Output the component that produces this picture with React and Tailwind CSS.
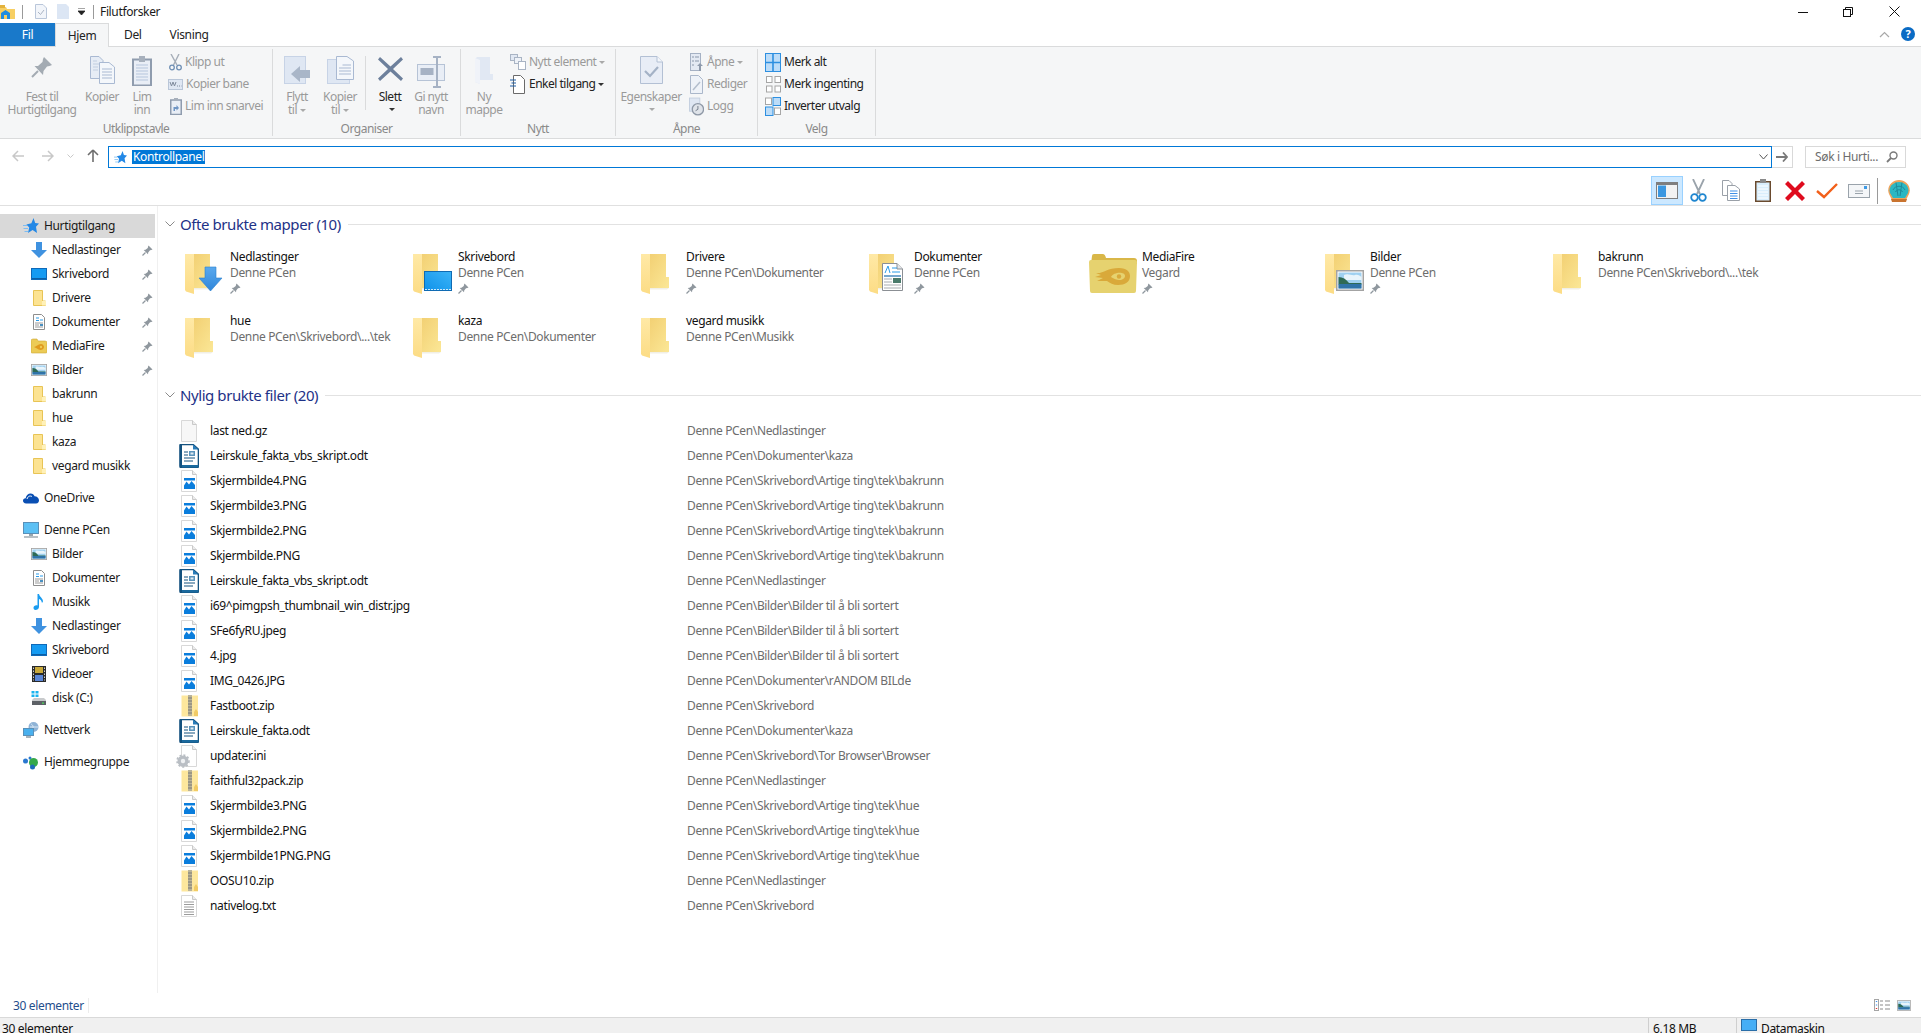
import React from "react";

// ---------- small shared drawings ----------
const Folder = ({ x = 0 }) => (
  <g transform={`translate(${x} 0)`}>
    <path d="M7 0H25V23H28V34H9V28H7Z" fill="url(#folderBack)" />
    <path d="M0 0H9V40L1 37.5 0 36Z" fill="url(#folderSide)" />
    <path d="M9 34H28L26 35.5H9Z" fill="#f1efe6" />
  </g>
);

const DownArrow = () => (
  <path d="M6 0H17V11H23L11.5 24 0 11H6Z" fill="url(#arrowBlue)" stroke="#2a7fcf" strokeWidth=".6" />
);

const Star = ({ size = 16 }) => (
  <svg width={size} height={size} viewBox="0 0 16 16" className="shrink-0">
    <path d="M10.5 0L12.2 5 16 5.4 13 8.8 14 15 9.6 12 5 15 6.2 9.6 3.4 6.4 8.4 5.2Z" fill="#2388e6" />
    <path d="M0 7.5H4M.5 10.5H5M1.5 13.5H5" stroke="#7dbcf2" />
  </svg>
);

const TileIcon = ({ kind }) => (
  <svg width="45" height="40" viewBox="0 0 45 40" className="overflow-visible">
    {kind === "media" ? (
      <g transform="translate(-8 0)">
        <path d="M3 2Q3 0 5 0H14Q16 0 17 4H45Q48 4 48 7V10H2Z" fill="#d9b748" />
        <path d="M0 8Q0 6 2 6H46Q48 6 48 8L47 37Q47 39 45 39H3Q1 39 1 37Z" fill="#e6d26f" />
        <path d="M7 19C14 20 18 14 30 14 38 14 41 18 41 22 41 28 36 31 29 31 24 31 21 29 18 27L8 27 14 24 6 23 12 21Z" fill="#d9a93a" />
        <path d="M22 23C24 18 36 17 36 22 36 26 29 28 22 23Z" fill="#e6d26f" />
        <circle cx="30" cy="22.5" r="2.2" fill="#d9a93a" />
      </g>
    ) : (
      <Folder />
    )}
    {kind === "down" && (
      <g transform="translate(14 13)"><DownArrow /></g>
    )}
    {kind === "desk" && (
      <g transform="translate(11 17)">
        <rect x=".5" y=".5" width="27" height="19" fill="url(#deskBlue)" stroke="#106bb3" />
        <path d="M1 18.5H27" stroke="#cfe9fb" strokeDasharray="2 1" />
      </g>
    )}
    {kind === "doc" && (
      <g transform="translate(13 9)">
        <path d="M.5.5H15L20.5 6V27.5H.5Z" fill="#fff" stroke="#8b8f94" />
        <path d="M15 .5V6H20.5" fill="#e4e6ea" stroke="#8b8f94" />
        <path d="M3 10L6 3 8 10M10 5H15M10 9H18" stroke="#2a9be8" fill="none" />
        <path d="M2 13H19" stroke="#1d6fb0" strokeWidth="1.2" />
        <path d="M2 16H10M2 19H10M2 22H19M2 25H19" stroke="#a8abb0" />
        <rect x="11" y="15" width="8" height="5" fill="#4a7a6b" />
      </g>
    )}
    {kind === "pics" && (
      <g transform="translate(11 16)"><Landscape w={28} h={21} /></g>
    )}
  </svg>
);

const Landscape = ({ w, h }) => (
  <svg width={w} height={h} viewBox="0 0 28 21">
    <rect x=".75" y=".75" width="26.5" height="19.5" fill="#fff" stroke="#a3a3a3" strokeWidth="1.5" />
    <rect x="2.5" y="2.5" width="23" height="16" fill="#9fd0f0" />
    <path d="M8 5C12 3 16 6 19 5S24 6 25.5 7V10H8Z" fill="#e8f4fb" />
    <path d="M2.5 7C7 7 10 9 13 13L25.5 13V14.5H2.5Z" fill="#2e6a55" />
    <rect x="2.5" y="14" width="23" height="4.5" fill="#2f73a8" />
  </svg>
);

const Pin = ({ className = "" }) => (
  <svg width="11" height="11" viewBox="0 0 11 11" className={className}>
    <path d="M6.5.5L10.5 4.5 9.3 5 8 5.2 6.2 7.5 6 9.3 1.7 5 3.5 4.8 5.8 3 6 1.7Z" fill="#8f979e" />
    <path d="M3.5 7.5L.5 10.5" stroke="#8f979e" strokeWidth="1.2" />
  </svg>
);

// ---------- sidebar icons, all 16px wide ----------
const SmallFolder = () => (
  <svg width="16" height="16" viewBox="0 0 16 16">
    <path d="M2.5.5H11.5V11H14.5V15.5H2.5Z" fill="#fce392" stroke="#e8c455" />
    <path d="M11 11H15V15.5H11Z" fill="#fff1b8" />
  </svg>
);

const SideIcon = ({ kind }) => {
  switch (kind) {
    case "star":
      return <Star />;
    case "down":
      return (
        <svg width="16" height="16" viewBox="0 0 16 16">
          <path d="M5 0H11V8H16L8 16 0 8H5Z" fill="#3f92e0" />
        </svg>
      );
    case "desk":
      return (
        <svg width="16" height="16" viewBox="0 0 16 16">
          <rect x=".5" y="2.5" width="15" height="11" fill="#159bf2" stroke="#0f69b8" />
          <path d="M1 12.5H15" stroke="#0b5fa5" />
        </svg>
      );
    case "folder":
      return <SmallFolder />;
    case "doc":
      return (
        <svg width="16" height="16" viewBox="0 0 16 16">
          <path d="M2.5.5H10.5L13.5 3.5V15.5H2.5Z" fill="#fff" stroke="#8e8e8e" />
          <path d="M5 4H8M9 6H12M5 6.5H8" stroke="#2a9be8" />
          <path d="M4 9H12M4 11H8M4 13H12" stroke="#9a9a9a" />
          <rect x="9" y="10" width="3" height="2" fill="#4a90c0" />
        </svg>
      );
    case "media":
      return (
        <svg width="16" height="16" viewBox="0 0 16 16">
          <path d="M0 3Q0 1 2 1H6L7 3H14Q16 3 16 5V14Q16 15 15 15H1Q0 15 0 14Z" fill="#eccb56" stroke="#cfa836" strokeWidth=".6" />
          <path d="M3 9C5 9 7 6 10 6 12 6 13 8 13 9 13 11 11 12 9.5 12 8 12 7 11 6 10.5Z" fill="#e09a1e" />
          <circle cx="10" cy="9" r="1.2" fill="#eccb56" />
        </svg>
      );
    case "pics":
      return <Landscape w={16} h={12} />;
    case "cloud":
      return (
        <svg width="16" height="16" viewBox="0 0 16 16">
          <path d="M3.2 13.5C1 13.5 0 12 0 10.8 0 9.4 1 8.2 2.6 8.2 3.2 5.5 5.2 3.5 7.6 3.5 9.6 3.5 11 4.8 11.6 6.2 14 6.2 16 8 16 10.2 16 12 15 13.5 13 13.5Z" fill="#0a4fb3" />
          <path d="M4 9C5 6 7 5.5 9 6.5" stroke="#fff" fill="none" />
        </svg>
      );
    case "pc":
      return (
        <svg width="16" height="16" viewBox="0 0 16 16">
          <rect x=".5" y=".5" width="15" height="11" fill="#5cc0f4" stroke="#5a90b8" />
          <rect x="6" y="12" width="4" height="2" fill="#9aa5ad" />
          <path d="M1 15H15" stroke="#9aa5ad" strokeWidth="1.4" />
        </svg>
      );
    case "music":
      return (
        <svg width="16" height="16" viewBox="0 0 16 16">
          <path d="M6.5 0H8C8.5 3 12 4 12 7.5L11 9C10.5 6.5 9.5 5.5 8 5V13C8 15 6 16 4.5 16S2.5 15 2.5 13.8C2.5 12 4.5 11 6.5 11.5Z" fill="#1a9cf0" />
        </svg>
      );
    case "video":
      return (
        <svg width="16" height="16" viewBox="0 0 16 16">
          <rect x="1" y="0" width="14" height="16" fill="#2a2a2a" />
          <path d="M2.5 1.5V14.5M13.5 1.5V14.5" stroke="#cfcfcf" strokeDasharray="1.5 1.5" />
          <rect x="4" y="1" width="8" height="6" fill="#c9a93a" />
          <rect x="4" y="9" width="8" height="6" fill="#5a86d8" />
        </svg>
      );
    case "disk":
      return (
        <svg width="16" height="16" viewBox="0 0 16 16">
          <path d="M.5 1H3.5V3.5H.5ZM4.5 1H7.5V3.5H4.5ZM.5 4.5H3.5V7H.5ZM4.5 4.5H7.5V7H4.5Z" fill="#19b4f0" />
          <path d="M1 10L3 8H13L15 10V14H1Z" fill="#c8cacc" />
          <rect x="1" y="11" width="14" height="4" fill="#5d6166" />
          <rect x="11" y="12.5" width="2" height="1.2" fill="#4de05a" />
        </svg>
      );
    case "net":
      return (
        <svg width="16" height="16" viewBox="0 0 16 16">
          <circle cx="10.5" cy="5" r="5" fill="#8fb3d6" />
          <path d="M8 2C10 3 11 5 9 8M7 5H15" stroke="#dbe9f5" fill="none" />
          <rect x=".5" y="6.5" width="10" height="7" fill="#49b0ee" stroke="#5a90b8" />
          <path d="M3 15H8" stroke="#8a9aa6" strokeWidth="1.5" />
        </svg>
      );
    case "home":
      return (
        <svg width="16" height="16" viewBox="0 0 16 16">
          <circle cx="2.5" cy="7" r="2.5" fill="#2a78d0" />
          <circle cx="7" cy="4" r="1.5" fill="#2a78d0" />
          <circle cx="10.5" cy="8.5" r="4.5" fill="#35a84a" />
          <circle cx="9.5" cy="13" r="2.5" fill="#1d6bb8" />
        </svg>
      );
    default:
      return null;
  }
};

// ---------- file icons ----------
const FileIcon = ({ kind }) => {
  if (kind === "odt") {
    return (
      <svg width="20" height="24" viewBox="0 0 20 24" className="-ml-[2px] shrink-0">
        <path d="M1 1.5Q1 .5 2 .5H14L19.5 5.5V22Q19.5 23.5 18 23.5H2Q1 23.5 1 22Z" fill="#fff" stroke="#14527f" strokeWidth="1.6" />
        <path d="M1 1.5Q1 .5 2 .5H3V23.5H2Q1 23.5 1 22Z" fill="#14527f" />
        <path d="M3 21H19.5V22Q19.5 23.5 18 23.5H3Z" fill="#1b6a9e" />
        <path d="M14 .5L19.5 5.5H14Z" fill="#2a7cb8" />
        <path d="M5 8H9M5 11H9M5 14H16M5 17H14" stroke="#15527e" />
        <rect x="10" y="7" width="6" height="5" fill="#5a93bb" />
        <rect x="11.5" y="8.5" width="3" height="2" fill="#dfeaf2" />
      </svg>
    );
  }
  return (
    <svg width="16" height="22" viewBox="0 0 16 22" className="overflow-visible shrink-0">
      {kind === "zip" ? (
        <g>
          <rect x=".5" y=".5" width="16.5" height="21" fill="#fde79d" />
          <rect x="7" y="0" width="4" height="21" fill="#b9b39a" />
          <path d="M7 3H11M7 6H11M7 9H11M7 12H11M7 15H11M7 18H11" stroke="#7c7a70" />
          <path d="M13 21V17L15 14 17 17V21Z" fill="#f1cb66" />
        </g>
      ) : (
        <g>
          <path d="M.5.5H11.5L15.5 4.5V21.5H.5Z" fill={kind === "blank" ? "#f7f7f7" : "#fff"} stroke="#d8d8d8" />
          <path d="M11.5.5V4.5H15.5" fill="#ececec" stroke="#c9c9c9" />
        </g>
      )}
      {kind === "img" && (
        <g>
          <rect x="3" y="8" width="11" height="11" fill="#0a7ddc" />
          <path d="M3 15.5L5.5 11.5 8 14.5 10.5 11 14 15V10.5H3Z" fill="#fff" />
        </g>
      )}
      {kind === "ini" && (
        <g>
          <circle cx="2" cy="16" r="5.5" fill="#b9bec4" />
          <circle cx="2" cy="16" r="2.2" fill="#eef0f2" />
          <circle cx="2" cy="16" r="6" fill="none" stroke="#b9bec4" strokeWidth="1.6" strokeDasharray="2 2" />
        </g>
      )}
      {kind === "txt" && (
        <path d="M3 7H13M3 9.5H13M3 12H13M3 14.5H13M3 17H13M3 19.5H13" stroke="#9b9b9b" />
      )}
    </svg>
  );
};

// ---------- ribbon drawings (greyed, 30ish px) ----------
const RibbonIcon = ({ kind }) => {
  switch (kind) {
    case "pin":
      return (
        <svg width="22" height="22" viewBox="0 0 22 22">
          <path d="M13 1L21 9 18.5 10 16 10.5 12.5 15 12 19 3.5 10 7 10 11.5 6 12 3Z" fill="#a3abb3" />
          <path d="M7 15L1 21" stroke="#a3abb3" strokeWidth="2" />
        </svg>
      );
    case "copy":
      return (
        <svg width="25" height="28" viewBox="0 0 25 28">
          <path d="M.5.5H9L13 4.5V22.5H.5Z" fill="#e6ecf5" stroke="#a9b9d2" />
          <path d="M9.5 6.5H19L24.5 11V27.5H9.5Z" fill="#f4f7fb" stroke="#a9b9d2" />
          <path d="M12 13H22M12 16H22M12 19H22M12 22H22" stroke="#a9b9d2" />
          <path d="M3 5H7M3 8H9M3 11H8M3 14H8" stroke="#c1cee0" />
        </svg>
      );
    case "paste":
      return (
        <svg width="20" height="30" viewBox="0 0 20 30">
          <rect x="1" y="3.5" width="18" height="26" fill="#e9eef6" stroke="#8f9cae" strokeWidth="2" />
          <rect x="7" y="0" width="6" height="6" fill="#a7b0bc" />
          <path d="M4 9H16M4 12H16M4 15H16M4 18H16M4 21H16M4 24H16" stroke="#b5c5dc" />
        </svg>
      );
    case "move":
      return (
        <svg width="27" height="28" viewBox="0 0 27 28">
          <rect x=".5" y=".5" width="21" height="27" fill="#dfe7f3" stroke="#c7d3e6" />
          <path d="M16 14V10L7 18 16 26V22H26V14Z" fill="#a9b6c8" />
        </svg>
      );
    case "copyto":
      return (
        <svg width="27" height="28" viewBox="0 0 27 28">
          <rect x=".5" y="3.5" width="22" height="24" fill="#dfe7f3" stroke="#c7d3e6" />
          <path d="M9.5.5H20L26.5 5V23.5H9.5Z" fill="#f4f7fb" stroke="#a9b9d2" />
          <path d="M15.5 9H24M12 12H24M12 15H24M12 18H24" stroke="#a9b9d2" />
        </svg>
      );
    case "del":
      return (
        <svg width="25" height="26" viewBox="0 0 25 26">
          <path d="M2 1L12.5 10.5 23 1 25 3.5 15 13 25 22.5 23 25 12.5 15.5 2 25 0 22.5 10 13 0 3.5Z" fill="#6d809c" />
        </svg>
      );
    case "rename":
      return (
        <svg width="28" height="32" viewBox="0 0 28 32">
          <rect x=".5" y="8.5" width="27" height="16" fill="#e9eef6" stroke="#b6c3d6" />
          <rect x="3.5" y="12" width="13" height="7" fill="#a6b2c4" />
          <path d="M16 1H24M20 1V31M16 31H24" stroke="#a6b2c4" strokeWidth="2" />
        </svg>
      );
    case "newfolder":
      return (
        <svg width="20" height="28" viewBox="0 0 20 28">
          <path d="M3 1H16V18H19V24H6V28L1 26V3Z" fill="#e1e8f3" />
          <path d="M1 2L6 4V28L1 26Z" fill="#f0f3f9" />
        </svg>
      );
    case "props":
      return (
        <svg width="23" height="28" viewBox="0 0 23 28">
          <path d="M.5.5H17L22.5 6V27.5H.5Z" fill="#e8edf6" stroke="#b3c0d4" />
          <path d="M17 .5V6H22.5" fill="#f4f7fb" stroke="#b3c0d4" />
          <path d="M5 15L10 20 18 11" stroke="#a4b2c6" strokeWidth="2.2" fill="none" />
        </svg>
      );
    default:
      return null;
  }
};

const SmallIcon = ({ kind }) => {
  switch (kind) {
    case "cut":
      return (
        <svg width="13" height="17" viewBox="0 0 13 17">
          <path d="M2 0L8 11M10 0L4.5 11" stroke="#a6aeb8" strokeWidth="1.4" />
          <circle cx="3" cy="13.5" r="2.3" fill="none" stroke="#6f8fb4" strokeWidth="1.3" />
          <circle cx="10" cy="13.5" r="2.3" fill="none" stroke="#6f8fb4" strokeWidth="1.3" />
        </svg>
      );
    case "path":
      return (
        <svg width="15" height="11" viewBox="0 0 15 11">
          <rect x=".5" y=".5" width="14" height="10" fill="#dfe7f3" stroke="#b9c6d8" />
          <path d="M2 3L3.5 7 5 3 6.5 7 8 3M9 7H10M11 7H12M13 7H13.5" stroke="#7f8b9c" fill="none" />
        </svg>
      );
    case "shortcut":
      return (
        <svg width="12" height="17" viewBox="0 0 12 17">
          <rect x=".75" y="2" width="10.5" height="14.5" fill="#e9eef6" stroke="#8f9cae" strokeWidth="1.5" />
          <rect x="4" y="0" width="4" height="3" fill="#a7b0bc" />
          <path d="M3.5 13V9H6.5V7L9 10 6.5 12.5V11H5V13Z" fill="#6f95c4" />
        </svg>
      );
    case "newitem":
      return (
        <svg width="16" height="16" viewBox="0 0 16 16">
          <rect x=".5" y=".5" width="7" height="6" fill="#e1e8f3" stroke="#a9b4c4" />
          <rect x="4.5" y="3.5" width="7" height="6" fill="#eef2f8" stroke="#a9b4c4" />
          <rect x="8.5" y="7.5" width="7" height="8" fill="#fff" stroke="#a9b4c4" />
        </svg>
      );
    case "easy":
      return (
        <svg width="15" height="19" viewBox="0 0 15 19">
          <path d="M3.5.5H10.5L14.5 4.5V18.5H3.5Z" fill="#fff" stroke="#6a6a6a" />
          <path d="M0 5H6M1.5 8H6M0 11H6" stroke="#1f5fa6" strokeWidth="1.2" />
        </svg>
      );
    case "open":
      return (
        <svg width="13" height="19" viewBox="0 0 13 19">
          <rect x=".5" y=".5" width="10" height="17" fill="#e3e9f3" stroke="#a5b1c4" />
          <path d="M2 4H4M5 4H9M2 8H4M5 8H9M2 12H4" stroke="#8a97aa" />
          <path d="M9 18V13H7L10 10 13 13H11V18Z" fill="#8e9aac" />
        </svg>
      );
    case "edit":
      return (
        <svg width="13" height="19" viewBox="0 0 13 19">
          <path d="M.5.5H8.5L12.5 4.5V18.5H.5Z" fill="#eef2f8" stroke="#aab7ca" />
          <path d="M3 15L10 7" stroke="#b2bdcc" strokeWidth="1.5" />
        </svg>
      );
    case "log":
      return (
        <svg width="16" height="19" viewBox="0 0 16 19">
          <rect x=".5" y=".5" width="11" height="14" fill="#dfe7f3" stroke="#c3cfdf" />
          <circle cx="9.5" cy="12.5" r="6" fill="#dfe3e9" stroke="#8e98a6" strokeWidth="1.4" />
          <path d="M9.5 9V12.5L7 14" stroke="#6f7a88" fill="none" />
        </svg>
      );
    case "all":
      return (
        <svg width="16" height="19" viewBox="0 0 16 19">
          <rect x=".5" y=".5" width="15" height="18" fill="#bcdcf8" stroke="#2d8fe0" />
          <path d="M8 0V19M0 9.5H16" stroke="#2d8fe0" strokeWidth="1.6" />
        </svg>
      );
    case "none":
      return (
        <svg width="15" height="17" viewBox="0 0 15 17">
          <rect x=".5" y=".5" width="5.5" height="6" fill="#fff" stroke="#a6a6a6" />
          <rect x="9" y=".5" width="5.5" height="6" fill="#fff" stroke="#a6a6a6" />
          <rect x=".5" y="10" width="5.5" height="6" fill="#fff" stroke="#a6a6a6" />
          <rect x="9" y="10" width="5.5" height="6" fill="#fff" stroke="#a6a6a6" />
        </svg>
      );
    case "invert":
      return (
        <svg width="16" height="19" viewBox="0 0 16 19">
          <rect x=".5" y="1" width="6" height="6.5" fill="#fff" stroke="#a6a6a6" />
          <rect x="8" y=".5" width="7.5" height="8" fill="#bcdcf8" stroke="#2d8fe0" />
          <rect x=".5" y="10" width="7.5" height="8.5" fill="#bcdcf8" stroke="#2d8fe0" />
          <rect x="9.5" y="11" width="6" height="6.5" fill="#fff" stroke="#a6a6a6" />
        </svg>
      );
    default:
      return null;
  }
};

const Caret = ({ dark }) => (
  <span className={`inline-block ml-[3px] align-middle w-0 h-0 border-x-[3px] border-x-transparent border-t-[3px] ${dark ? "border-t-[#333333]" : "border-t-[#a9a9a9]"}`} />
);

const BigBtn = ({ w, icon, lines, dark, caret }) => (
  <div className="flex flex-col items-center pt-[6px] shrink-0" style={{ width: w }}>
    <div className="h-[35px] flex items-start justify-center pt-[1px]">
      <RibbonIcon kind={icon} />
    </div>
    <div className={`text-center leading-[13px] ${dark ? "text-[#222222]" : "text-[#9a9a9a]"}`}>
      {lines.map((l, i) => (
        <div key={i} className="h-[13px] whitespace-nowrap">
          {l}
          {caret && lines.length > 1 && i === 1 && <Caret dark={dark} />}
        </div>
      ))}
      {caret && lines.length === 1 && (
        <div className="h-[13px] flex justify-center items-center">
          <Caret dark={dark} />
        </div>
      )}
    </div>
  </div>
);

const SmallBtn = ({ icon, label, dark, caret, iconW = 17, ml = 0 }) => (
  <div className="h-[22px] flex items-center whitespace-nowrap" style={{ marginLeft: ml }}>
    <div className="flex justify-center shrink-0" style={{ width: iconW }}>
      <SmallIcon kind={icon} />
    </div>
    <span className={`ml-[3px] ${dark ? "text-[#222222]" : "text-[#9a9a9a]"}`}>
      {label}
      {caret && <Caret dark={dark} />}
    </span>
  </div>
);

const Group = ({ w, label, children }) => (
  <div className="h-[87px] flex flex-col border-r border-[#dadbdc] shrink-0" style={{ width: w }}>
    <div className="flex-1 flex items-start min-h-0">{children}</div>
    <div className="h-[14px] leading-[14px] text-center text-[#8a8a8a]">{label}</div>
  </div>
);

const SmallCol = ({ children, className = "" }) => (
  <div className={`pt-[2px] ${className}`}>{children}</div>
);

const Ribbon = () => (
  <div className="h-[92px] shrink-0 bg-[#f5f6f7] border-b border-[#dadbdc] pt-[2px] flex tracking-[-0.5px]">
    <Group w={273} label="Utklippstavle">
      <BigBtn w={84} icon="pin" lines={["Fest til", "Hurtigtilgang"]} />
      <BigBtn w={36} icon="copy" lines={["Kopier"]} />
      <BigBtn w={44} icon="paste" lines={["Lim", "inn"]} />
      <SmallCol className="ml-[5px]">
        <SmallBtn icon="cut" label="Klipp ut" iconW={13} />
        <SmallBtn icon="path" label="Kopier bane" iconW={15} ml={-1} />
        <SmallBtn icon="shortcut" label="Lim inn snarvei" iconW={13} />
      </SmallCol>
    </Group>
    <Group w={188} label="Organiser">
      <BigBtn w={48} icon="move" lines={["Flytt", "til"]} caret />
      <BigBtn w={38} icon="copyto" lines={["Kopier", "til"]} caret />
      <div className="w-px h-[54px] mt-[7px] ml-[6px] bg-[#dadbdc] shrink-0" />
      <BigBtn w={48} icon="del" lines={["Slett"]} dark caret />
      <BigBtn w={34} icon="rename" lines={["Gi nytt", "navn"]} />
    </Group>
    <Group w={155} label="Nytt">
      <BigBtn w={46} icon="newfolder" lines={["Ny", "mappe"]} />
      <SmallCol className="ml-[2px]">
        <SmallBtn icon="newitem" label="Nytt element" caret />
        <SmallBtn icon="easy" label="Enkel tilgang" dark caret />
      </SmallCol>
    </Group>
    <Group w={142} label="Åpne">
      <BigBtn w={70} icon="props" lines={["Egenskaper"]} caret />
      <SmallCol className="ml-[3px]">
        <SmallBtn icon="open" label="Åpne" caret iconW={15} />
        <SmallBtn icon="edit" label="Rediger" iconW={15} />
        <SmallBtn icon="log" label="Logg" iconW={15} />
      </SmallCol>
    </Group>
    <Group w={118} label="Velg">
      <SmallCol className="ml-[7px]">
        <SmallBtn icon="all" label="Merk alt" iconW={16} dark />
        <SmallBtn icon="none" label="Merk ingenting" iconW={16} dark />
        <SmallBtn icon="invert" label="Inverter utvalg" iconW={16} dark />
      </SmallCol>
    </Group>
  </div>
);

const TitleBar = () => (
  <div className="h-[23px] shrink-0 flex items-center bg-white">
    <svg width="15" height="14" viewBox="0 0 15 14" className="shrink-0">
      <path d="M0 2H6L7 4H15V14H0Z" fill="#f7cf63" />
      <rect x="0" y="0" width="5" height="3" fill="#e3b23c" />
      <path d="M1 14V8L5.5 5 10 8V14H7V10H4V14Z" fill="#1f8de0" />
    </svg>
    <div className="w-px h-[14px] bg-[#9a9a9a] ml-[7px]" />
    <svg width="12" height="15" viewBox="0 0 12 15" className="ml-[12px]">
      <path d="M.5.5H8L11.5 4V14.5H.5Z" fill="#f2f5fa" stroke="#b9c6da" />
      <path d="M3 8L5.5 10.5 9 6" stroke="#aab4c4" fill="none" />
    </svg>
    <svg width="12" height="15" viewBox="0 0 12 15" className="ml-[10px]">
      <path d="M0 0H9L12 3V15H0Z" fill="#dce6f4" />
    </svg>
    <svg width="7" height="7" viewBox="0 0 7 7" className="ml-[9px]">
      <path d="M0 0H7M0 3H7L3.5 7Z" stroke="#222222" strokeWidth=".8" fill="#222222" />
    </svg>
    <div className="w-px h-[14px] bg-[#9a9a9a] ml-[8px]" />
    <span className="ml-[6px] text-[#1a1a1a]">Filutforsker</span>
    <div className="flex-1" />
    <svg width="10" height="10" viewBox="0 0 10 10" className="mr-[35px]">
      <path d="M0 5.5H10" stroke="#111111" />
    </svg>
    <svg width="10" height="10" viewBox="0 0 10 10" className="mr-[36px]">
      <rect x=".5" y="2.5" width="7" height="7" fill="none" stroke="#111111" />
      <path d="M2.5 2.5V.5H9.5V7.5H7.5" fill="none" stroke="#111111" />
    </svg>
    <svg width="11" height="11" viewBox="0 0 11 11" className="mr-[21px]">
      <path d="M.5.5L10.5 10.5M10.5.5L.5 10.5" stroke="#111111" />
    </svg>
  </div>
);

const TabRow = () => (
  <div className="h-[24px] shrink-0 flex items-start border-b border-[#dadbdc] relative">
    <div className="w-[55px] h-[23px] bg-[#1979ca] text-white flex items-center justify-center">Fil</div>
    <div className="w-[54px] h-[24px] bg-[#f5f6f7] border-x border-t border-[#dadbdc] flex items-center justify-center text-[#222222] relative z-10">Hjem</div>
    <div className="ml-[15px] h-[23px] flex items-center text-[#222222]">Del</div>
    <div className="ml-[28px] h-[23px] flex items-center text-[#222222]">Visning</div>
    <div className="flex-1" />
    <svg width="11" height="7" viewBox="0 0 11 7" className="mt-[8px] mr-[11px]">
      <path d="M1 6L5.5 1.5 10 6" stroke="#a8a8a8" strokeWidth="1.2" fill="none" />
    </svg>
    <div className="w-[14px] h-[14px] mt-[4px] mr-[6px] rounded-full bg-[#0a6bc4] text-white text-[11px] leading-[14px] font-bold text-center">?</div>
  </div>
);

const NavBar = () => (
  <div className="h-[33px] shrink-0 flex items-start pt-[7px] bg-white">
    <svg width="12" height="12" viewBox="0 0 12 12" className="ml-[12px] mt-[4px]">
      <path d="M6 1L1 6 6 11M1 6H12" stroke="#c8c8c8" strokeWidth="1.5" fill="none" />
    </svg>
    <svg width="12" height="12" viewBox="0 0 12 12" className="ml-[18px] mt-[4px]">
      <path d="M6 1L11 6 6 11M11 6H0" stroke="#c8c8c8" strokeWidth="1.5" fill="none" />
    </svg>
    <svg width="7" height="5" viewBox="0 0 7 5" className="ml-[13px] mt-[8px]">
      <path d="M.5 .5L3.5 3.5 6.5 .5" stroke="#c8c8c8" fill="none" />
    </svg>
    <svg width="12" height="13" viewBox="0 0 12 13" className="ml-[13px] mt-[3px]">
      <path d="M6 1L1 6M6 1L11 6M6 1V13" stroke="#6e6e6e" strokeWidth="1.6" fill="none" />
    </svg>
    <div className="ml-[9px] w-[1664px] h-[22px] border border-[#0078d7] flex items-center pl-[5px] pr-[3px]">
      <Star size={13} />
      <span className="ml-[5px] bg-[#0078d7] text-white h-[14px] leading-[14px] px-px">Kontrollpanel</span>
      <div className="flex-1" />
      <svg width="9" height="6" viewBox="0 0 9 6">
        <path d="M.5 .5L4.5 5 8.5 .5" stroke="#555555" fill="none" />
      </svg>
    </div>
    <div className="w-[21px] h-[22px] border border-l-0 border-[#d9d9d9] flex items-center justify-center">
      <svg width="12" height="10" viewBox="0 0 12 10">
        <path d="M7 .5L11 5 7 9.5M11 5H0" stroke="#7a7a7a" strokeWidth="1.8" fill="none" />
      </svg>
    </div>
    <div className="ml-[12px] w-[101px] h-[22px] border border-[#d9d9d9] flex items-center pl-[9px] text-[#6d6d6d]">
      <span className="whitespace-nowrap">Søk i Hurti...</span>
      <svg width="12" height="12" viewBox="0 0 12 12" className="ml-[8px]">
        <circle cx="7.5" cy="4.5" r="3.5" fill="none" stroke="#7a7a7a" strokeWidth="1.4" />
        <path d="M5 7L1 11" stroke="#7a7a7a" strokeWidth="1.8" />
      </svg>
    </div>
  </div>
);

const ToolBar = () => (
  <div className="h-[34px] shrink-0 flex items-end justify-end pr-[10px] border-b border-[#e0e0e0] bg-white">
    <div className="w-[32px] h-[29px] bg-[#cce8ff] border border-[#99d1ff] flex items-center justify-center">
      <svg width="22" height="17" viewBox="0 0 22 17">
        <rect x=".5" y=".5" width="21" height="16" fill="#f2f2f2" stroke="#7e7e7e" />
        <rect x="1" y="1" width="20" height="2" fill="#7e7e7e" />
        <rect x="2" y="3.5" width="8" height="11.5" fill="#3b97e0" />
      </svg>
    </div>
    <div className="ml-[7px] h-[29px] flex items-center">
      <svg width="17" height="23" viewBox="0 0 17 23">
        <path d="M3 0L10 15M14 0L7 15" stroke="#9aa3ab" strokeWidth="1.8" />
        <circle cx="4.5" cy="18.5" r="3.3" fill="none" stroke="#1f86cf" strokeWidth="1.8" />
        <circle cx="12.5" cy="18.5" r="3.3" fill="none" stroke="#1f86cf" strokeWidth="1.8" />
      </svg>
    </div>
    <div className="ml-[15px] h-[29px] flex items-center">
      <svg width="18" height="21" viewBox="0 0 18 21">
        <path d="M.5.5H7L10 3.5V15.5H.5Z" fill="#fff" stroke="#9aa0a8" />
        <path d="M5.5 5.5H13L17.5 9V20.5H5.5Z" fill="#fff" stroke="#9aa0a8" />
        <path d="M8 11H15.5M8 13.5H15.5M8 16H15.5M8 18.5H15.5" stroke="#3f8fe6" />
      </svg>
    </div>
    <div className="ml-[15px] h-[29px] flex items-center">
      <svg width="16" height="23" viewBox="0 0 16 23">
        <rect x=".75" y="2.75" width="14.5" height="19.5" fill="#d9eefc" stroke="#6a4a2e" strokeWidth="1.5" />
        <rect x="5" y="0" width="6" height="4" fill="#8a8a8a" />
        <path d="M3 7H13M3 10H13M3 13H13M3 16H13M3 19H13" stroke="#fff" />
      </svg>
    </div>
    <div className="ml-[14px] h-[29px] flex items-center">
      <svg width="20" height="20" viewBox="0 0 20 20">
        <path d="M3 0L10 7 17 0 20 3 13 10 20 17 17 20 10 13 3 20 0 17 7 10 0 3Z" fill="#df0b1e" />
      </svg>
    </div>
    <div className="ml-[11px] h-[29px] flex items-center">
      <svg width="22" height="16" viewBox="0 0 22 16">
        <path d="M1 8L8 14 21 1" stroke="#f2601a" strokeWidth="2.4" fill="none" />
      </svg>
    </div>
    <div className="ml-[10px] h-[29px] flex items-center">
      <svg width="22" height="14" viewBox="0 0 22 14">
        <rect x=".5" y=".5" width="21" height="13" fill="#f4f6f8" stroke="#9aa3ab" />
        <rect x="16" y="2" width="3" height="3" fill="#3f9be6" />
        <path d="M7 7H15M7 9.5H15" stroke="#9aa3ab" />
      </svg>
    </div>
    <div className="ml-[7px] w-px h-[26px] mb-[1px] bg-[#9a9a9a]" />
    <div className="ml-[9px] h-[29px] flex items-center">
      <svg width="24" height="22" viewBox="0 0 24 22">
        <path d="M2 14C-1 7 5 0 12 0S25 7 22 14L19 20H5Z" fill="#f0a35a" />
        <path d="M3 13C1 7 6 2 12 2S23 7 21 13L18 18H6Z" fill="#2bb7c2" />
        <path d="M6 10C8 5 16 5 18 10M8.5 12C10 9 14 9 15.5 12M9 2.5L11 16M15 2.5L13 16" stroke="#1e8a99" fill="none" />
        <path d="M4 19H20L19 22H5Z" fill="#c9742f" />
      </svg>
    </div>
  </div>
);

const SideRow = ({ icon, label, level = 1, pin, selected, mt = 0 }) => (
  <div
    className={`h-[24px] w-[155px] shrink-0 flex items-center whitespace-nowrap text-[#1a1a1a] ${selected ? "bg-[#d9d9d9]" : ""}`}
    style={{ marginTop: mt }}
  >
    <div className={`${level === 0 ? "ml-[23px]" : "ml-[31px]"} w-[16px] shrink-0`}>
      <SideIcon kind={icon} />
    </div>
    <span className="ml-[5px] flex-1">{label}</span>
    {pin && <Pin className="mr-[2px]" />}
  </div>
);

const Sidebar = () => (
  <div className="w-[158px] shrink-0 border-r border-[#f0f0f0] pt-[8px] flex flex-col">
    <SideRow icon="star" label="Hurtigtilgang" level={0} selected />
    <SideRow icon="down" label="Nedlastinger" pin />
    <SideRow icon="desk" label="Skrivebord" pin />
    <SideRow icon="folder" label="Drivere" pin />
    <SideRow icon="doc" label="Dokumenter" pin />
    <SideRow icon="media" label="MediaFire" pin />
    <SideRow icon="pics" label="Bilder" pin />
    <SideRow icon="folder" label="bakrunn" />
    <SideRow icon="folder" label="hue" />
    <SideRow icon="folder" label="kaza" />
    <SideRow icon="folder" label="vegard musikk" />
    <SideRow icon="cloud" label="OneDrive" level={0} mt={8} />
    <SideRow icon="pc" label="Denne PCen" level={0} mt={8} />
    <SideRow icon="pics" label="Bilder" />
    <SideRow icon="doc" label="Dokumenter" />
    <SideRow icon="music" label="Musikk" />
    <SideRow icon="down" label="Nedlastinger" />
    <SideRow icon="desk" label="Skrivebord" />
    <SideRow icon="video" label="Videoer" />
    <SideRow icon="disk" label="disk (C:)" />
    <SideRow icon="net" label="Nettverk" level={0} mt={8} />
    <SideRow icon="home" label="Hjemmegruppe" level={0} mt={8} />
  </div>
);

const FOLDERS = [
  { kind: "down", name: "Nedlastinger", sub: "Denne PCen", pin: true },
  { kind: "desk", name: "Skrivebord", sub: "Denne PCen", pin: true },
  { kind: "plain", name: "Drivere", sub: "Denne PCen\\Dokumenter", pin: true },
  { kind: "doc", name: "Dokumenter", sub: "Denne PCen", pin: true },
  { kind: "media", name: "MediaFire", sub: "Vegard", pin: true },
  { kind: "pics", name: "Bilder", sub: "Denne PCen", pin: true },
  { kind: "plain", name: "bakrunn", sub: "Denne PCen\\Skrivebord\\...\\tek" },
  { kind: "plain", name: "hue", sub: "Denne PCen\\Skrivebord\\...\\tek" },
  { kind: "plain", name: "kaza", sub: "Denne PCen\\Dokumenter" },
  { kind: "plain", name: "vegard musikk", sub: "Denne PCen\\Musikk" },
];

const ART = "Denne PCen\\Skrivebord\\Artige ting\\tek";
const FILES = [
  ["blank", "last ned.gz", "Denne PCen\\Nedlastinger"],
  ["odt", "Leirskule_fakta_vbs_skript.odt", "Denne PCen\\Dokumenter\\kaza"],
  ["img", "Skjermbilde4.PNG", ART + "\\bakrunn"],
  ["img", "Skjermbilde3.PNG", ART + "\\bakrunn"],
  ["img", "Skjermbilde2.PNG", ART + "\\bakrunn"],
  ["img", "Skjermbilde.PNG", ART + "\\bakrunn"],
  ["odt", "Leirskule_fakta_vbs_skript.odt", "Denne PCen\\Nedlastinger"],
  ["img", "i69^pimgpsh_thumbnail_win_distr.jpg", "Denne PCen\\Bilder\\Bilder til å bli sortert"],
  ["img", "SFe6fyRU.jpeg", "Denne PCen\\Bilder\\Bilder til å bli sortert"],
  ["img", "4.jpg", "Denne PCen\\Bilder\\Bilder til å bli sortert"],
  ["img", "IMG_0426.JPG", "Denne PCen\\Dokumenter\\rANDOM BILde"],
  ["zip", "Fastboot.zip", "Denne PCen\\Skrivebord"],
  ["odt", "Leirskule_fakta.odt", "Denne PCen\\Dokumenter\\kaza"],
  ["ini", "updater.ini", "Denne PCen\\Skrivebord\\Tor Browser\\Browser"],
  ["zip", "faithful32pack.zip", "Denne PCen\\Nedlastinger"],
  ["img", "Skjermbilde3.PNG", ART + "\\hue"],
  ["img", "Skjermbilde2.PNG", ART + "\\hue"],
  ["img", "Skjermbilde1PNG.PNG", ART + "\\hue"],
  ["zip", "OOSU10.zip", "Denne PCen\\Nedlastinger"],
  ["txt", "nativelog.txt", "Denne PCen\\Skrivebord"],
];

const SectionHead = ({ label, className = "" }) => (
  <div className={`h-[20px] flex items-center ${className}`}>
    <svg width="10" height="6" viewBox="0 0 10 6" className="shrink-0">
      <path d="M.5 .5L5 5 9.5 .5" stroke="#8a8a8a" fill="none" />
    </svg>
    <span className="ml-[5px] text-[15px] tracking-[-0.43px] text-[#1e3287] whitespace-nowrap">{label}</span>
    <div className="flex-1 h-px bg-[#e2e2e2] ml-[7px]" />
  </div>
);

const Content = () => (
  <div className="flex-1 min-w-0 pl-[7px] overflow-hidden">
    <SectionHead label="Ofte brukte mapper (10)" className="mt-[8px]" />
    <div className="mt-[14px] ml-[20px] grid grid-cols-[repeat(7,228px)] auto-rows-[64px]">
      {FOLDERS.map((f) => (
        <div key={f.name} className="flex">
          <div className="w-[45px] pt-[6px] shrink-0">
            <TileIcon kind={f.kind} />
          </div>
          <div className="pt-px leading-[16px] whitespace-nowrap">
            <div className="text-[#111111]">{f.name}</div>
            <div className="text-[#6d6d6d]">{f.sub}</div>
            {f.pin && <Pin className="mt-[2px]" />}
          </div>
        </div>
      ))}
    </div>
    <SectionHead label="Nylig brukte filer (20)" className="mt-[9px]" />
    <div className="mt-[13px] ml-[16px]">
      {FILES.map((f, i) => (
        <div key={i} className="h-[25px] flex items-center whitespace-nowrap">
          <div className="w-[29px] shrink-0 flex">
            <FileIcon kind={f[0]} />
          </div>
          <div className="w-[477px] shrink-0 text-[#111111]">{f[1]}</div>
          <div className="text-[#6d6d6d]">{f[2]}</div>
        </div>
      ))}
    </div>
  </div>
);

const BottomBars = () => (
  <>
    <div className="h-[24px] shrink-0 flex items-center bg-white">
      <span className="ml-[13px] mt-[2px] text-[#1f4e8c]">30 elementer</span>
      <div className="w-px h-[15px] bg-[#ececec] ml-[4px]" />
      <div className="flex-1" />
      <svg width="17" height="12" viewBox="0 0 17 12">
        <rect x=".5" y=".5" width="4" height="11" fill="#fff" stroke="#a5a5a5" />
        <path d="M2.5 2V3" stroke="#3f8fe6" strokeWidth="1.4" />
        <path d="M2.5 5.5V6.5" stroke="#3f8fe6" strokeWidth="1.4" />
        <path d="M2.5 9V10" stroke="#df3333" strokeWidth="1.4" />
        <path d="M6 2H9M11 2H16M6 6H9M11 6H16M6 10H9M11 10H16" stroke="#8a8a8a" />
      </svg>
      <div className="ml-[6px] mr-[10px]">
        <Landscape w={14} h={11} />
      </div>
    </div>
    <div className="h-[16px] shrink-0 bg-[#f0f0f0] border-t border-[#d9d9d9] flex text-[#111111] overflow-hidden">
      <span className="ml-[2px] mt-[3px] w-[1646px] leading-[16px]">30 elementer</span>
      <div className="w-px bg-[#cfcfcf]" />
      <span className="ml-[4px] mt-[3px] w-[83px] leading-[16px]">6,18 MB</span>
      <div className="w-px bg-[#cfcfcf]" />
      <svg width="16" height="15" viewBox="0 0 16 15" className="ml-[4px] mt-[1px] shrink-0">
        <rect x=".5" y=".5" width="15" height="11" fill="#46aef5" stroke="#2a6ea8" />
      </svg>
      <span className="ml-[4px] mt-[3px] leading-[16px]">Datamaskin</span>
    </div>
  </>
);

export default function App() {
  return (
    <div className="w-[1921px] h-[1033px] flex flex-col overflow-hidden bg-white font-['Noto_Sans','Open_Sans',sans-serif] text-[12px] tracking-[-0.35px] leading-[16px]">
      <svg className="absolute w-0 h-0">
        <defs>
          <linearGradient id="folderBack" x1="0" y1="0" x2="1" y2="1">
            <stop offset="0" stopColor="#f2cf72" />
            <stop offset="1" stopColor="#fbe796" />
          </linearGradient>
          <linearGradient id="folderSide" x1="0" y1="0" x2="0" y2="1">
            <stop offset="0" stopColor="#ffe9a6" />
            <stop offset="1" stopColor="#fcdc85" />
          </linearGradient>
          <linearGradient id="arrowBlue" x1="0" y1="0" x2="0" y2="1">
            <stop offset="0" stopColor="#5aa9ee" />
            <stop offset="1" stopColor="#2f86da" />
          </linearGradient>
          <linearGradient id="deskBlue" x1="0" y1="1" x2="1" y2="0">
            <stop offset="0" stopColor="#0f92ea" />
            <stop offset="1" stopColor="#3cb4f7" />
          </linearGradient>
        </defs>
      </svg>
      <TitleBar />
      <TabRow />
      <Ribbon />
      <NavBar />
      <ToolBar />
      <div className="flex-1 min-h-0 flex">
        <Sidebar />
        <Content />
      </div>
      <BottomBars />
    </div>
  );
}
